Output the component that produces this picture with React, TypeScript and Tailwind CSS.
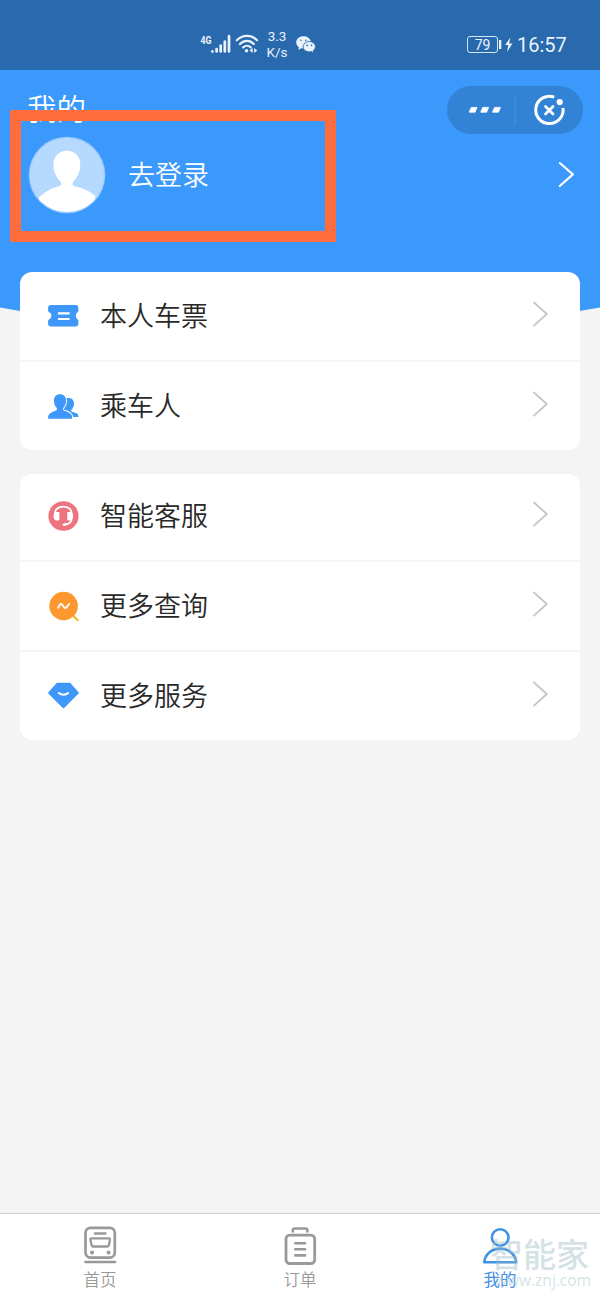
import type { ReactNode } from 'react';

const StatusBar = () => (
  <div className="flex h-[70px] shrink-0 items-start bg-[#2969ae] text-[#eaf3fc]">
    <svg className="ml-[200px] mt-[30px] h-[28px] w-[60px] shrink-0" viewBox="200 30 60 28" fill="none" stroke="currentColor">
      <text x="200.5" y="43.5" fontSize="10" fontWeight="700" fontFamily="Roboto, sans-serif" fill="currentColor" stroke="none" textLength="11" lengthAdjust="spacingAndGlyphs">4G</text>
      <path strokeWidth="2.7" strokeLinecap="round" d="M212.4 51.3V51.6M216.6 49V51.5M220.7 45.5V51.5M224.8 41.5V51.5M229 36.2V51.5" />
      <path strokeWidth="2.2" strokeLinecap="round" d="M236.8 40.3C242.5 34.3 251.5 34.3 257 40.3M240 44C244.2 39.8 249.8 39.8 253.8 44M243.2 47.4C245.5 45.2 248.6 45.2 250.7 47.4" />
      <circle cx="246.5" cy="50.7" r="1.8" fill="currentColor" stroke="none" />
      <path d="M252.7 48v5l-3.1-2.5zM254.2 48v5l3.1-2.5z" fill="currentColor" stroke="none" />
    </svg>
    <div className="ml-[6px] mt-[28px] w-[22px] whitespace-nowrap text-center text-[13.5px] leading-[16px]">
      <div>3.3</div>
      <div>K/s</div>
    </div>
    <svg className="ml-[8px] mt-[35px] h-[19px] w-[20px] shrink-0" viewBox="296 35 20 19">
      <path d="M303.5 36.2c4.1 0 7.4 2.7 7.4 6.1s-3.3 6.2-7.4 6.2l-2.1-.3-3 1.7.5-2.7c-1.7-1.2-2.7-2.9-2.7-4.9 0-3.4 3.2-6.1 7.3-6.1z" fill="currentColor" />
      <path d="M309.3 41.5c3.5 0 6.1 2.3 6.1 5.2 0 1.7-.9 3-2.2 4l.4 2.2-2.4-1.3-1.9.3c-3.4 0-6.1-2.3-6.1-5.2s2.7-5.2 6.1-5.2z" fill="currentColor" stroke="#2969ae" strokeWidth=".9" />
      <path d="M301 40.2v.1M305.7 40.2v.1M307.2 45.3v.1M311.5 45.3v.1" stroke="#2969ae" strokeWidth="1.6" strokeLinecap="round" />
    </svg>
    <div className="ml-[151px] mt-[36px] flex h-[17px] w-[31px] shrink-0 items-center justify-center rounded-[3px] border border-[#d5e6f5] text-[14px] leading-none">79</div>
    <svg className="mt-[36px] h-[17px] w-[16px] shrink-0" viewBox="498 36 16 17" fill="currentColor">
      <path d="M499 40h2.3v9H499zM510.4 37.5l-5.2 7.4h3.1l-1.2 7 5.3-8.4h-3.3z" />
    </svg>
    <div className="ml-[3px] mt-[33px] text-[20px] leading-[24px]">16:57</div>
  </div>
);

const Capsule = () => (
  <svg className="h-[48px] w-[136px] shrink-0" viewBox="447 86 136 48" fill="none">
    <rect x="447" y="86" width="136" height="48" rx="24" fill="#3283d5" />
    <path d="M515 97v28" stroke="#428fdc" strokeWidth="1.5" />
    <path d="M471.3 107.4h5.7l-2 4.8h-5.8zM482.7 107.4h5.9l-2 4.8h-5.9zM494.5 107.4h6l-2.1 4.8h-5.9z" fill="white" stroke="white" strokeWidth=".8" strokeLinejoin="round" />
    <path d="M554.3 97.1A13.7 13.7 0 1 0 563 108" stroke="white" strokeWidth="3" />
    <circle cx="559.7" cy="102.1" r="3.1" fill="white" />
    <path d="m545.5 106.5 7.5 7.5m0-7.5-7.5 7.5" stroke="white" strokeWidth="2.7" strokeLinecap="round" />
  </svg>
);

const Avatar = () => (
  <svg className="h-[78px] w-[78px] shrink-0" viewBox="28 136 78 78">
    <defs>
      <clipPath id="face"><circle cx="67" cy="175" r="37" /></clipPath>
    </defs>
    <circle cx="67" cy="175" r="38.3" fill="#9bcbfd" />
    <circle cx="67" cy="175" r="37" fill="#b6d9ff" />
    <path clipPath="url(#face)" d="M67 150.7c8.2 0 13.6 5.7 13.3 14.7-.3 7.5-3.6 12.5-7.2 16.4-.9 1.3-.7 3.2.8 4.3 8 1.7 15.6 4.8 21.4 10V217H39v-19.5c5.8-5.7 13.1-9.7 20.8-11.4 1.5-1.1 1.7-3 .8-4.3-3.6-3.9-6.9-8.9-7.2-16.4-.3-9 5.4-14.7 13.6-14.7z" fill="white" />
  </svg>
);

const TicketIcon = () => (
  <svg className="h-[32px] w-[32px] shrink-0" viewBox="48 300 32 32">
    <path d="M51 305h24.5c2 0 2.9 1 2.9 3v3.2l-1.8 2.1c-1 1.1-1 3.8 0 4.9l1.8 2.1v3.2c0 2-1 3-2.9 3H51c-2 0-2.9-1-2.9-3v-3.2l2.4-2.1c1.1-1.1 1.1-3.8 0-4.9l-2.4-2.1V308c0-2 1-3 2.9-3z" fill="#3e98fa" />
    <path d="M58.8 313.4h10M58.8 319h10" stroke="white" strokeWidth="2.1" strokeLinecap="round" />
  </svg>
);

const PeopleIcon = () => (
  <svg className="h-[32px] w-[32px] shrink-0" viewBox="48 390 32 32" fill="#3e98fa">
    <path d="M64 398h4.4c3.5 0 5.6 2.1 5.6 5.5 0 2.5-1 4.7-2.5 6.1-.6 1.1-.2 1.9.8 2.3 3.9.9 6.2 1.9 6.2 4.3 0 .5-.3.7-.9.7h-6L63 410z" />
    <path d="M60 394.2c3.9 0 6.1 2.6 6.1 6.5 0 2.8-1 5.3-2.7 7.1-.7 1.2-.4 2.3.9 2.9 5.1 1.4 7.9 3.5 7.9 6.7v.5c0 .6-.3.9-.9.9H49c-.6 0-.9-.3-.9-.9v-.5c0-3.2 2.6-5.3 7.6-6.7 1.3-.6 1.6-1.7.9-2.9-1.7-1.8-2.7-4.3-2.7-7.1 0-3.9 2.2-6.5 6.1-6.5z" stroke="white" strokeWidth="2" paintOrder="stroke" />
  </svg>
);

const SupportIcon = () => (
  <svg className="h-[32px] w-[32px] shrink-0" viewBox="48 500 32 32" fill="none">
    <ellipse cx="63.5" cy="516" rx="15.1" ry="14.7" fill="#ed737e" />
    <path d="M54.9 514v-.8c0-3.9 3.5-6.6 8.4-6.6s8.4 2.7 8.4 6.6v5.2c0 3.1-2.4 5.3-6.3 6.2" stroke="white" strokeWidth="1.8" />
    <path d="M58.3 511.9h-1.7c-1.8 0-3.1 1.9-3.1 4.3s1.3 4.3 3.1 4.3h1.7c.8 0 1.1-.5 1.1-1.2v-6.2c0-.8-.4-1.2-1.1-1.2zM68.3 511.9H70c1.8 0 3.1 1.9 3.1 4.3s-1.3 4.3-3.1 4.3h-1.7c-.8 0-1.1-.5-1.1-1.2v-6.2c0-.8.4-1.2 1.1-1.2z" fill="white" />
    <ellipse cx="64.8" cy="524.6" rx="2.3" ry="1.4" fill="white" transform="rotate(-12 64.8 524.6)" />
  </svg>
);

const QueryIcon = () => (
  <svg className="h-[32px] w-[32px] shrink-0" viewBox="48 590 32 32" fill="none" strokeLinecap="round" strokeLinejoin="round">
    <path d="m73.8 616.4 4 3.8" stroke="#fbb72f" strokeWidth="2.2" />
    <circle cx="63.6" cy="606" r="14.3" fill="#fc982e" />
    <path d="M58 607.7l2-2.9c.8-1.1 1.4-1.1 2.2 0l2 2.7c.7.9 1.4.8 2.1-.1l2.9-3.4" stroke="white" strokeWidth="1.9" />
  </svg>
);

const ServiceIcon = () => (
  <svg className="h-[32px] w-[32px] shrink-0" viewBox="48 680 32 32" fill="none">
    <path d="M57.1 683.8h12.8l7.9 9.1-14.3 14.3L49.2 693z" fill="#3e98fa" stroke="#3e98fa" strokeWidth="2" strokeLinejoin="round" />
    <path d="M58.8 693.1c2.6 2.2 6.8 2.2 9.4 0" stroke="white" strokeWidth="2" strokeLinecap="round" />
  </svg>
);

const Chevron = () => (
  <svg className="ml-auto mr-[30px] h-[32px] w-[20px] shrink-0 -translate-y-[2px]" viewBox="530 298 20 32" fill="none">
    <path d="m534 302.5 12.8 11.5L534 325.7" stroke="#c6c6c6" strokeWidth="1.8" strokeLinecap="round" strokeLinejoin="round" />
  </svg>
);

const Row = ({ icon, label, first = false, short = false }: { icon: ReactNode; label: string; first?: boolean; short?: boolean }) => (
  <div className={`flex items-center pl-[28px] text-[27px] text-[#292929] ${first ? '' : 'border-t-2 border-[#f5f5f5]'} ${short ? 'h-[86px] pb-[2px]' : first ? 'h-[88px]' : 'h-[90px]'}`}>
    {icon}
    <span className="ml-[20px] pt-[3px] font-[350] leading-none">{label}</span>
    <Chevron />
  </div>
);

const HomeIcon = () => (
  <svg className="h-[42px] w-[36px]" viewBox="82 1224 36 42" fill="none" stroke="currentColor" strokeLinecap="round" strokeLinejoin="round">
    <rect x="85.5" y="1227.8" width="29.3" height="29.8" rx="5" strokeWidth="2.7" />
    <path d="M95 1233.4h10.4M85.4 1262h29.7" strokeWidth="2.5" />
    <path d="M91.5 1238.3h17.3c1 0 1.3.5 1.2 1.3l-1.1 5.6c-.1.8-.6 1.3-1.4 1.3H93c-.8 0-1.3-.5-1.4-1.3l-1.2-5.6c-.2-.8.2-1.3 1.1-1.3z" strokeWidth="2.3" />
    <path d="M92 1252.5h.1M108.5 1252.5h.1" strokeWidth="3.9" />
  </svg>
);

const OrderIcon = () => (
  <svg className="h-[42px] w-[36px]" viewBox="282 1224 36 42" fill="none" stroke="currentColor" strokeLinecap="round" strokeLinejoin="round">
    <rect x="286" y="1235.2" width="28.7" height="28.3" rx="3.8" strokeWidth="2.8" />
    <path d="M292.8 1231.5v-1.2c0-1.1.8-1.8 1.9-1.8h10.8c1.2 0 1.9.7 1.9 1.8v1.2" strokeWidth="2.6" />
    <path d="M295.3 1243.3h9.8M295.3 1249.3h9.8M295.3 1255.4h9.8" strokeWidth="2.6" />
  </svg>
);

const MineIcon = () => (
  <svg className="h-[42px] w-[36px]" viewBox="482 1224 36 42" fill="none" stroke="currentColor" strokeWidth="2.6" strokeLinejoin="round">
    <circle cx="500.2" cy="1237.5" r="8.3" />
    <path d="M484.2 1262.3c.8-8 7.4-13.7 16-13.7s15.2 5.7 16 13.7z" />
  </svg>
);

const Tab = ({ icon, label, active = false }: { icon: ReactNode; label: string; active?: boolean }) => (
  <div className={`flex flex-1 flex-col items-center pt-[10px] ${active ? 'text-[#3f91e6]' : 'text-[#999999]'}`}>
    {icon}
    <span className={`mt-[6px] text-[16.5px] leading-[17px] ${active ? 'font-normal' : 'font-[350]'}`}>{label}</span>
  </div>
);

export default function App() {
  return (
    <div className="relative flex h-[1300px] w-[600px] flex-col overflow-hidden bg-[#f4f4f4] font-['Roboto','Noto_Sans_CJK_SC',sans-serif]">
      <StatusBar />
      <header className="relative h-[202px] shrink-0 bg-[#3b99fc] text-white">
        <svg className="absolute left-0 top-[201px] h-[70px] w-[600px]" viewBox="0 271 600 70">
          <path d="M0 271H600V307.5Q300 363 0 307.5Z" fill="#3b99fc" />
        </svg>
        <div className="flex h-[64px] items-start justify-between pl-[27px] pr-[17px] pt-[16px]">
          <h1 className="mt-[8px] text-[29.5px] font-[350] leading-[32px]">我的</h1>
          <Capsule />
        </div>
        <div className="flex items-center pl-[28px] pr-[24px] pt-[2px]">
          <Avatar />
          <span className="ml-[22px] pt-[2px] text-[27px] font-[350] leading-none">去登录</span>
          <svg className="mb-[2px] ml-auto h-[30px] w-[20px]" viewBox="556 159 20 30" fill="none">
            <path d="m559.8 163 13.1 11.4-13.1 11.6" stroke="white" strokeWidth="2.1" strokeLinecap="round" strokeLinejoin="round" />
          </svg>
        </div>
        <div className="absolute left-[10px] top-[40px] h-[132px] w-[326px] border-[11px] border-[#ff6c3d]" />
      </header>
      <main className="relative flex flex-1 flex-col gap-[24px] px-[20px]">
        <section className="overflow-hidden rounded-[12px] bg-white">
          <Row first icon={<TicketIcon />} label="本人车票" />
          <Row icon={<PeopleIcon />} label="乘车人" />
        </section>
        <section className="overflow-hidden rounded-[12px] bg-white">
          <Row first short icon={<SupportIcon />} label="智能客服" />
          <Row icon={<QueryIcon />} label="更多查询" />
          <Row icon={<ServiceIcon />} label="更多服务" />
        </section>
      </main>
      <nav className="flex h-[87px] shrink-0 border-t border-[#cfcfcf] bg-white">
        <Tab icon={<HomeIcon />} label="首页" />
        <Tab icon={<OrderIcon />} label="订单" />
        <Tab active icon={<MineIcon />} label="我的" />
      </nav>
      <div className="absolute left-[490px] top-[1239px] w-[110px] whitespace-nowrap text-[#9dbdc5]/45">
        <div className="text-[33px] font-medium leading-[34px]">智能家</div>
        <div className="ml-[5px] mt-[-1px] font-['Open_Sans'] text-[15.5px] font-medium leading-[17px]">www.znj.com</div>
      </div>
    </div>
  );
}
